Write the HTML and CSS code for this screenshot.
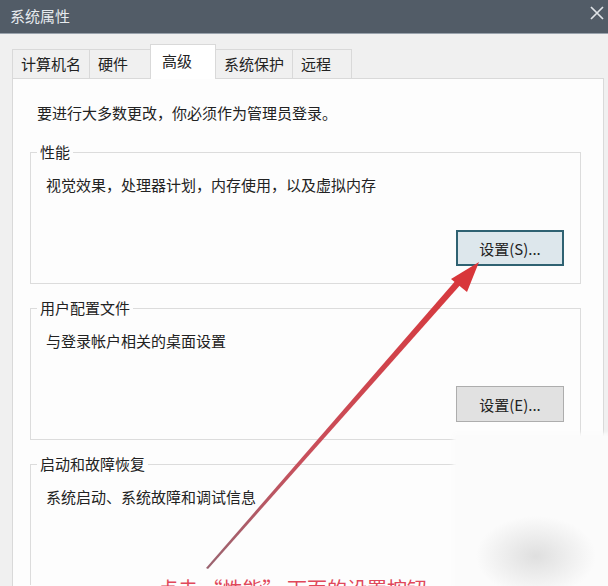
FILE: index.html
```html
<!DOCTYPE html>
<html lang="zh-CN">
<head>
  <meta charset="UTF-8" />
  <title>系统属性</title>
  <link rel="stylesheet" href="styles.css">
</head>
<body>
  <div class="titlebar">
    <span class="title">系统属性</span>
    <svg class="close" width="14" height="14" viewBox="0 0 14 14">
      <path d="M1 1 L13 13 M13 1 L1 13" stroke="#dfe3e7" stroke-width="1.7" fill="none"/>
    </svg>
  </div>

  <div class="dialog">
    <div class="tabs">
      <div class="tab">计算机名</div>
      <div class="tab">硬件</div>
      <div class="tab active">高级</div>
      <div class="tab">系统保护</div>
      <div class="tab">远程</div>
    </div>

    <div class="panel">
      <p class="intro">要进行大多数更改，你必须作为管理员登录。</p>

      <fieldset class="group">
        <legend>性能</legend>
        <p class="desc">视觉效果，处理器计划，内存使用，以及虚拟内存</p>
        <div class="actions">
          <button class="btn focused">设置(S)...</button>
        </div>
      </fieldset>

      <fieldset class="group">
        <legend>用户配置文件</legend>
        <p class="desc">与登录帐户相关的桌面设置</p>
        <div class="actions">
          <button class="btn">设置(E)...</button>
        </div>
      </fieldset>

      <fieldset class="group last">
        <legend>启动和故障恢复</legend>
        <p class="desc">系统启动、系统故障和调试信息</p>
      </fieldset>
    </div>
  </div>

  <!-- 右下角被涂抹的区域 -->
  <div class="smudge"></div>

  <!-- 红色箭头标注 -->
  <svg class="arrow" width="608" height="586" viewBox="0 0 608 586">
    <defs>
      <linearGradient id="arrowGrad" x1="207" y1="568" x2="479" y2="264" gradientUnits="userSpaceOnUse">
        <stop offset="0" stop-color="#9a6470"/>
        <stop offset="0.35" stop-color="#c8505c"/>
        <stop offset="1" stop-color="#d8363a"/>
      </linearGradient>
    </defs>
    <polygon points="206,568 208,569 462,283 457,279" fill="url(#arrowGrad)"/>
    <polygon points="479,262 467,292 451,279" fill="#d8363a"/>
  </svg>

  <div class="note">点击 “性能” 下面的设置按钮 。</div>
</body>
</html>
```

FILE: styles.css
```css
* { box-sizing: border-box; margin: 0; padding: 0; }
html, body {
  width: 608px;
  height: 586px;
  overflow: hidden;
}
body {
  font-family: "Noto Sans CJK SC", "Noto Sans", sans-serif;
  font-size: 15px;
  color: #222;
  background: #f0f0f0;
  position: relative;
}
.titlebar {
  height: 34px;
  background: #525c67;
  border-bottom: 1px solid #9aa3ad;
  display: flex;
  justify-content: space-between;
  align-items: center;
  padding: 0 4px 2px 10px;
}
.title {
  color: #e6eaee;
  font-size: 15px;
  line-height: 20px;
}
.close { margin-top: -6px; }

.dialog {
  padding: 10px 4px 0 12px;
}
.tabs {
  display: flex;
  align-items: flex-end;
  position: relative;
  z-index: 1;
}
.tab {
  height: 29px;
  min-width: 60px;
  padding: 0 8px;
  line-height: 27px;
  background: #f0f0f0;
  border: 1px solid #d9d9d9;
  border-bottom: none;
  border-right: none;
  color: #222;
}
.tab:nth-child(2) { min-width: 61px; }
.tab:nth-child(5) { border-right: 1px solid #d9d9d9; }
.tab.active {
  height: 35px;
  min-width: 66px;
  padding: 6px 11px 0;
  line-height: 20px;
  background: #fff;
  margin-bottom: -1px;
  border-right: 1px solid #d9d9d9;
}
.tab.active + .tab { border-left: none; }

.panel {
  background: #fdfdfd;
  border: 1px solid #d9d9d9;
  border-bottom: none;
  padding: 23px 22px 0 17px;
  height: 509px;
}
.intro {
  line-height: 21px;
  padding-left: 7px;
  margin-bottom: 19px;
}
.group {
  border: 1px solid #dcdcdc;
  padding: 12px 16px 17px 15px;
  margin-bottom: 14px;
}
.group legend {
  font-size: 15px;
  line-height: 20px;
  padding: 0 3px;
  margin-left: -9px;
}
.desc { line-height: 21px; }
.actions {
  display: flex;
  justify-content: flex-end;
  margin-top: 35px;
}
.btn {
  width: 108px;
  height: 36px;
  font-family: inherit;
  font-size: 15px;
  color: #222;
  background: #e1e1e1;
  border: 1px solid #adadad;
}
.btn.focused {
  background: #dde7ec;
  border: 2px solid #2f6272;
}
.group.last {
  height: 131px;
  border-bottom: none;
  margin-bottom: 0;
}

.smudge {
  position: absolute;
  left: 456px;
  top: 436px;
  right: 0;
  bottom: 0;
  background:
    radial-gradient(ellipse 60px 40px at 80px 120px, rgba(200, 200, 200, 0.55), rgba(230, 230, 230, 0) 100%),
    #fbfbfb;
  box-shadow: 0 0 4px 3px #fbfbfb;
}
.arrow {
  position: absolute;
  left: 0;
  top: 0;
  pointer-events: none;
}
.note {
  position: absolute;
  left: 158px;
  top: 577px;
  font-size: 20px;
  line-height: 24px;
  color: #e0485a;
  white-space: nowrap;
}
```
